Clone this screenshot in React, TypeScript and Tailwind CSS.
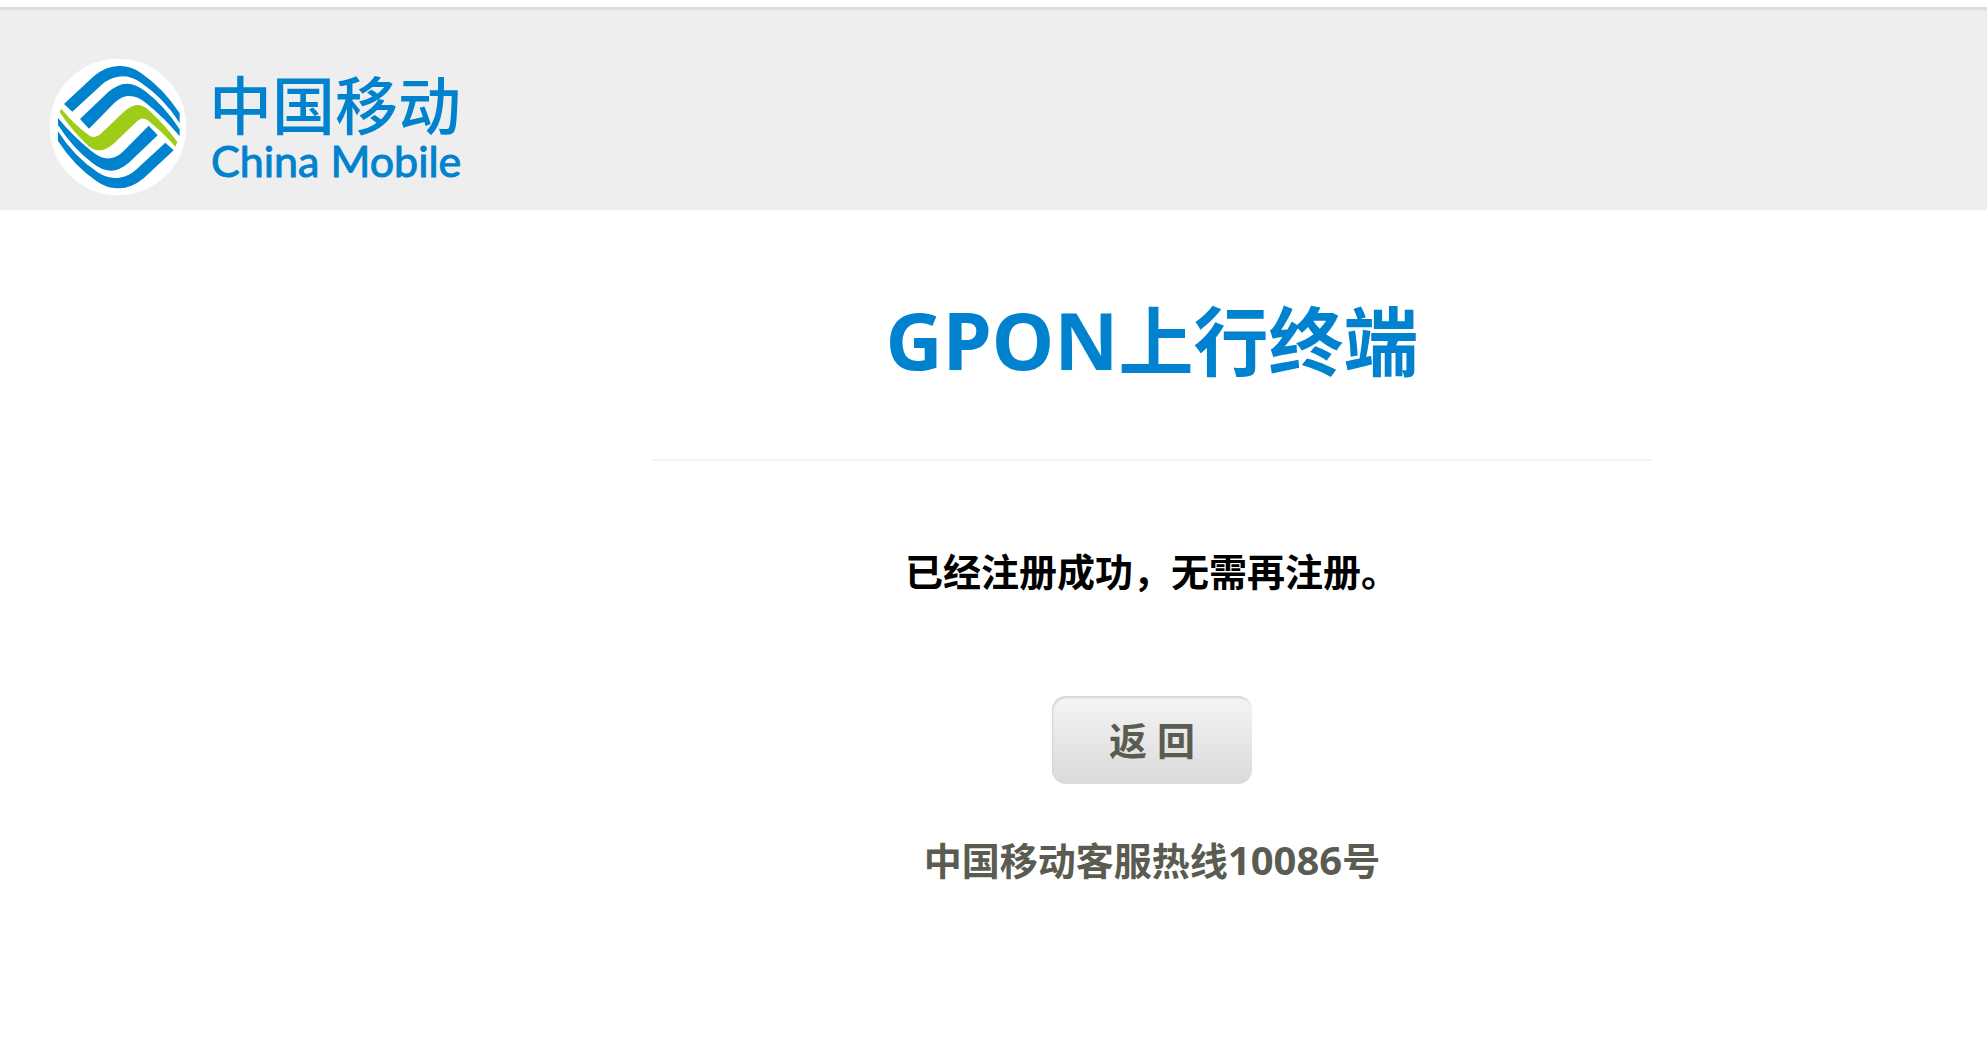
import React from "react";

function LogoMark() {
  return (
    <svg viewBox="27 22 414 414" className="size-[138px] shrink-0" aria-hidden="true">
      <defs>
        <g id="waves">
          <path d="M72 160L162 76Q200 45 238 46Q272 45 303 67Q370 113 419 188V217Q372 142 300 94Q268 73 235 78Q207 82 185 102L97 183Z" />
          <path d="M120 205L204 125Q235 98 262 99Q288 100 315 121Q375 167 419 236V257Q375 203 318 157Q290 133 262 136Q242 138 222 158L147 234Z" />
        </g>
      </defs>
      <circle cx="234" cy="229" r="205" fill="#fff" />
      <g fill="#0082cf">
        <use href="#waves" />
        <use href="#waves" transform="rotate(180 236.5 229.5)" />
      </g>
      <path
        fill="#9fcc17"
        d="M64 174Q100 220 151 257Q167 263 181 251L251 184Q275 163 292 163Q308 163 325 177Q375 222 412 274L406 288Q370 246 322 208Q308 198 293 210L223 277Q200 298 182 299Q163 300 148 288Q95 240 59 184Z"
      />
    </svg>
  );
}

export default function App() {
  return (
    <div className="min-h-screen bg-white pt-[7px] font-['Noto_Sans','Noto_Sans_CJK_SC',sans-serif]">
      <header className="flex items-start border-t-[3px] border-[#dcdcdc] bg-[#eee] pt-12 pb-[14px] pl-[49px]">
        <LogoMark />
        <div className="ml-[22px] flex flex-col pt-[14px] text-[#0082cf]">
          <span className="text-[63px] leading-[66px] font-medium whitespace-nowrap">中国移动</span>
          <span className="pl-[2px] font-['Lato',sans-serif] text-[43px] leading-[46px] whitespace-nowrap [-webkit-text-stroke:1px_#0082cf]">
            China Mobile
          </span>
        </div>
      </header>

      <main className="flex flex-col items-center pl-[317px] text-[38px] font-bold">
        <h1 className="flex h-[249px] w-full max-w-[1000px] items-center justify-center pt-3 text-[75px] leading-[100px] whitespace-nowrap text-[#0082cf]">
          <span>
            <span className="text-[79px]">GPON</span>上行终端
          </span>
        </h1>
        <hr className="w-full max-w-[1000px] border-t-2 border-[#f2f2f2]" />
        <p className="mt-[82px] leading-[56px] text-black">已经注册成功，无需再注册。</p>
        <button
          type="button"
          className="mt-[97px] h-[88px] w-[200px] rounded-[14px] bg-linear-to-b from-[#f5f5f5] to-[#dadada] leading-[56px] text-[#5b5c51] shadow-[inset_1px_2px_2px_#d4d4d4]"
        >
          返 回
        </button>
        <p className="mt-12 leading-[56px] text-[#5b5c51]">
          中国移动客服热线<span className="text-[40px]">10086</span>号
        </p>
      </main>
    </div>
  );
}
